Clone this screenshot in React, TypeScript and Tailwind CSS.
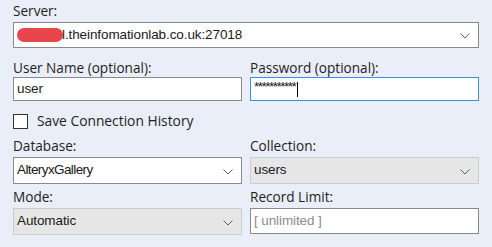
const Chevron = () => (
  <svg width="10" height="6" viewBox="0 0 10 6" className="shrink-0 mt-[2px]">
    <path d="M0.5 0.5 L5 5 L9.5 0.5" fill="none" stroke="#606060" strokeWidth="1" />
  </svg>
)

const label = "text-[13.6px] leading-[16px] text-[#1e1e1e] font-['Open_Sans',sans-serif]"
const value = "text-[13.5px] text-[#1a1a1a] font-['Liberation_Sans',Arial,sans-serif] tracking-[-0.1px]"

export default function App() {
  return (
    <div className="w-[492px] h-[247px] bg-[#eaeef8] px-[13px] pt-[3px] overflow-hidden">
      <div className={label}>Server:</div>
      <div className="mt-[3px] h-[26px] flex items-center border border-[#8a8a8a] bg-white pl-[3px] pr-[8px]">
        <span className={value + " flex-1 flex items-center"}>
          <span className="inline-block w-[46px] h-[14px] bg-[#e8464a] rounded-[7px] mr-[-1px]" />
          <span>l.theinfomationlab.co.uk:27018</span>
        </span>
        <Chevron />
      </div>

      <div className="grid grid-cols-2 gap-x-[8px] mt-[12px]">
        <div>
          <div className={label}>User Name (optional):</div>
          <div className="mt-[1px] h-[24px] flex items-center border border-[#8a8a8a] bg-white pl-[3px]">
            <span className={value}>user</span>
          </div>
        </div>
        <div>
          <div className={label}>Password (optional):</div>
          <div className="mt-[1px] h-[24px] flex items-center border border-[#3c8fe0] bg-white pl-[3px]">
            <span className={value + " tracking-[-1.5px] -mt-[3px]"}>***********</span>
            <span className="ml-[2px] w-[1px] h-[15px] bg-black" />
          </div>
        </div>
      </div>

      <div className="flex items-center mt-[12px] h-[16px]">
        <div className="w-[15px] h-[15px] border border-[#333333] bg-white" />
        <span className="ml-[9px] text-[13.8px] text-[#1e1e1e] font-['Open_Sans',sans-serif] font-medium">Save Connection History</span>
      </div>

      <div className="grid grid-cols-2 gap-x-[8px] mt-[9px]">
        <div>
          <div className={label}>Database:</div>
          <div className="mt-[3px] h-[27px] flex items-center border border-[#8a8a8a] bg-white pl-[3px] pr-[8px]">
            <span className={value + " flex-1 tracking-[-0.6px]"}>AlteryxGallery</span>
            <Chevron />
          </div>
        </div>
        <div>
          <div className={label}>Collection:</div>
          <div className="mt-[3px] h-[27px] flex items-center border border-[#cccccc] bg-[#e6e6e6] pl-[3px] pr-[8px]">
            <span className={value + " flex-1"}>users</span>
            <Chevron />
          </div>
        </div>
        <div className="mt-[5px]">
          <div className={label}>Mode:</div>
          <div className="mt-[3px] h-[27px] flex items-center border border-[#cccccc] bg-[#e6e6e6] pl-[3px] pr-[8px]">
            <span className={value + " flex-1"}>Automatic</span>
            <Chevron />
          </div>
        </div>
        <div className="mt-[5px]">
          <div className={label}>Record Limit:</div>
          <div className="mt-[3px] h-[26px] flex items-center border border-[#8a8a8a] bg-white pl-[3px]">
            <span className={value + " text-[#8c8c8c]"}>[ unlimited ]</span>
          </div>
        </div>
      </div>
    </div>
  )
}
